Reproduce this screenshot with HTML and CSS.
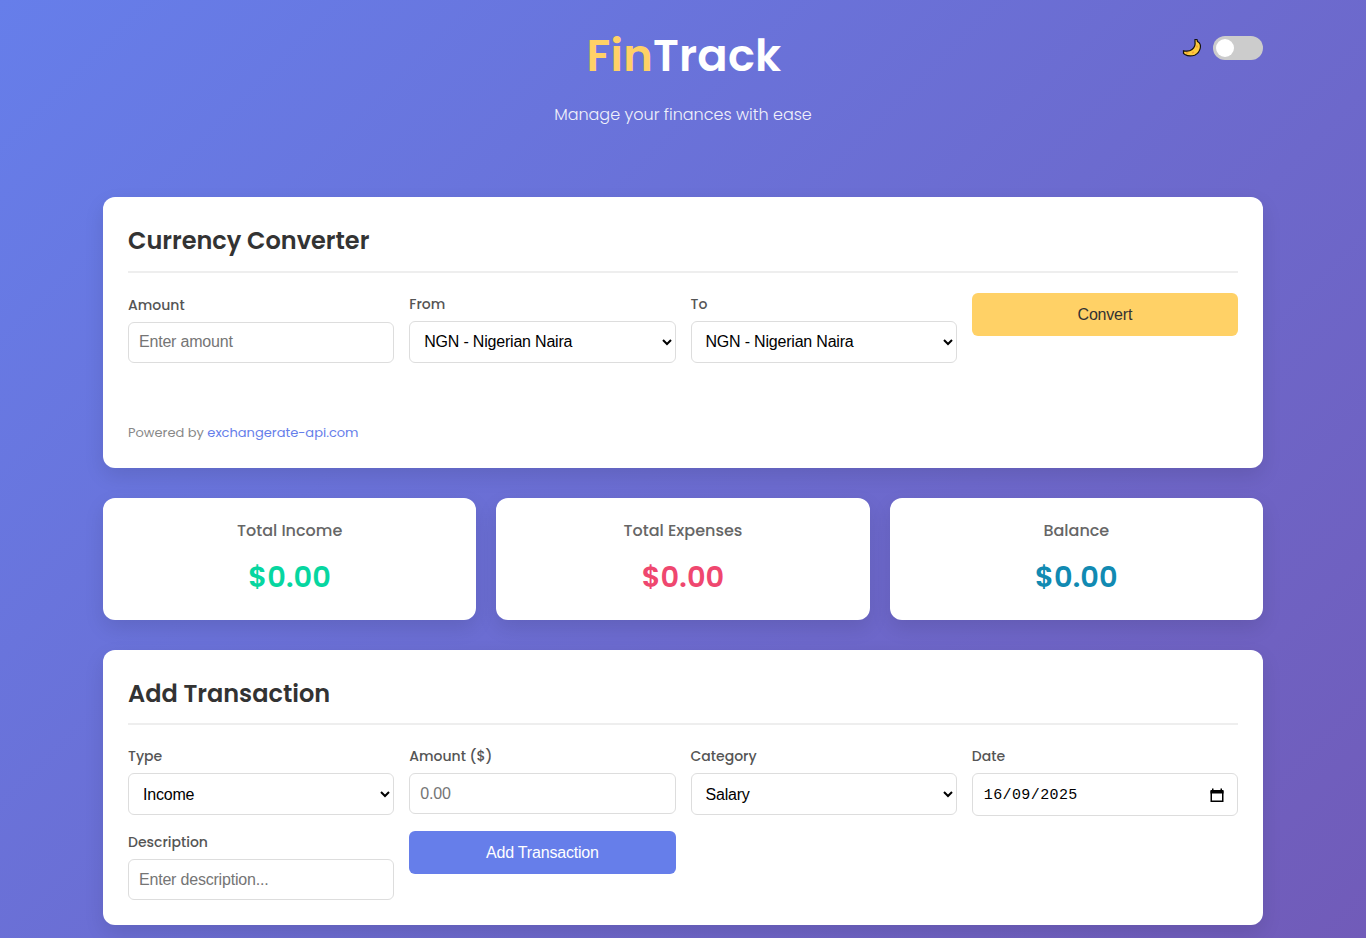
FILE: index.html
```html
<!DOCTYPE html>
<html lang="en">
<head>
<meta charset="UTF-8">
<title>FinTrack</title>
<link rel="stylesheet" href="styles.css">
</head>
<body>
<div class="container">
  <header class="header">
    <h1 class="logo"><span class="accent">Fin</span>Track</h1>
    <p class="tagline">Manage your finances with ease</p>
    <div class="theme">
      <svg class="moon" viewBox="0 0 20 20" width="20" height="20"><path d="M13 1.500H15L15.500 3.500Q19.200 5.500 18.300 10Q17.300 15 12.700 17.200Q7 19 3 16.500L1.500 15.500V12.800Q7 14 10 11.500Q13.800 8.500 13 4Z" fill="#ffcb3d" stroke="#15120c" stroke-width="1.2"/><path d="M4 14.800 6.500 15M15 7.500v2M10 15l2-1" stroke="#f4a332" stroke-width="1.500"/></svg>
      <span class="switch"><span class="knob"></span></span>
    </div>
  </header>

  <section class="card converter">
    <h2 class="title">Currency Converter</h2>
    <form class="grid align-end">
      <div class="group"><label class="label">Amount</label><input class="field" type="text" placeholder="Enter amount"></div>
      <div class="group"><label class="label">From</label><select class="field select"><option>NGN - Nigerian Naira</option></select></div>
      <div class="group"><label class="label">To</label><select class="field select"><option>NGN - Nigerian Naira</option></select></div>
      <button class="btn btn-convert" type="button">Convert</button>
    </form>
    <p class="powered">Powered by <a class="link">exchangerate-api.com</a></p>
  </section>

  <section class="summary">
    <div class="stat"><h3 class="stat-name">Total Income</h3><p class="stat-value income">$0.00</p></div>
    <div class="stat"><h3 class="stat-name">Total Expenses</h3><p class="stat-value expense">$0.00</p></div>
    <div class="stat"><h3 class="stat-name">Balance</h3><p class="stat-value balance">$0.00</p></div>
  </section>

  <section class="card">
    <h2 class="title">Add Transaction</h2>
    <form class="grid">
      <div class="group"><label class="label">Type</label><select class="field select"><option>Income</option></select></div>
      <div class="group"><label class="label">Amount ($)</label><input class="field" type="text" placeholder="0.00"></div>
      <div class="group"><label class="label">Category</label><select class="field select"><option>Salary</option></select></div>
      <div class="group"><label class="label">Date</label>
        <div class="field date"><span>16/09/2025</span>
          <svg width="14" height="15" viewBox="0 0 14 15"><path d="M1.250 3v10.250h11.500V3" fill="none" stroke="#000" stroke-width="1.500"/><path d="M.500 2h13v3.500H.500zM2 .500h1.500v2H2zM10.500 .500h1.500v2H10.500z"/></svg>
        </div>
      </div>
      <div class="group"><label class="label">Description</label><input class="field" type="text" placeholder="Enter description..."></div>
      <button class="btn btn-add" type="button">Add Transaction</button>
    </form>
  </section>
</div>
</body>
</html>
```
FILE: styles.css
```css
* { box-sizing: border-box; margin: 0; padding: 0; }
html { height: 938px; overflow: hidden; }
body {
  height: 938px;
  overflow: hidden;
  font-family: Poppins, Inter, sans-serif;
  line-height: 1.6;
  color: #333;
  background: linear-gradient(135deg, #667eea 0%, #764ba2 100%) 0 0 / 100% 2000px no-repeat;
}
.container { width: 1200px; margin: 0 auto; padding: 20px; }
.header { position: relative; height: 177.4px; text-align: center; color: #fff; }
.logo { padding-left: 2px; font-size: 44.8px; font-weight: 600; line-height: 72px; letter-spacing: 0.2px; }
.accent { color: #ffd166; }
.tagline { margin-top: 10px; font-size: 16px; font-weight: 300; line-height: 26px; opacity: .9; }
.theme { position: absolute; top: 16px; right: 0; display: flex; align-items: center; gap: 11px; }
.switch { width: 50px; height: 24px; padding: 3px; border-radius: 12px; background: #ccc; }
.knob { display: block; width: 18px; height: 18px; border-radius: 50%; background: #fff; }
.card {
  padding: 25px;
  margin-bottom: 30px;
  border-radius: 12px;
  background: #fff;
  box-shadow: 0 8px 20px rgba(0, 0, 0, .1);
}
.converter { height: 270.6px; }
.title {
  margin-bottom: 20px;
  padding-bottom: 10px;
  border-bottom: 2px solid #eee;
  font-size: 24px;
  font-weight: 600;
  line-height: 38.4px;
}
.grid { display: grid; grid-template-columns: repeat(4, 1fr); gap: 15px; align-items: start; }
.align-end { align-items: end; }
.group { display: flex; flex-direction: column; }
.label { margin-bottom: 5px; font-size: 14px; font-weight: 500; line-height: 22.4px; color: #555; }
.align-end .label { margin-bottom: 5.5px; }
.field {
  width: 100%;
  height: 41px;
  padding: 11px 10px 9px;
  border: 1px solid #ddd;
  border-radius: 6px;
  background: #fff;
  font: 16px "Liberation Sans", Arial, sans-serif;
  letter-spacing: -0.2px;
  color: #000;
}
.field::placeholder { color: #757575; }
.select { height: 42px; }
.align-end .field { padding-top: 10px; padding-bottom: 10px; }
.date {
  height: 43.4px;
  display: flex;
  align-items: center;
  justify-content: space-between;
  padding: 12px 13px 10px 11px;
  font: 15px "Liberation Mono", monospace;
  letter-spacing: 0.4px;
}
.btn { height: 43px; padding-top: 1px; border: 0; border-radius: 6px; font: 16px "Liberation Sans", Arial, sans-serif; letter-spacing: -0.2px; }
.btn-convert { align-self: start; background: #ffd166; color: #333; }
.btn-add { background: #667eea; color: #fff; }
.powered { margin-top: 59.4px; font-size: 13px; line-height: 21px; color: #888; }
.link { color: #667eea; }
.summary { display: grid; grid-template-columns: repeat(3, 1fr); gap: 20px; margin-bottom: 30px; }
.stat {
  height: 122px;
  padding: 20px;
  border-radius: 12px;
  background: #fff;
  text-align: center;
  box-shadow: 0 8px 20px rgba(0, 0, 0, .1);
}
.stat-name { margin-bottom: 10px; font-size: 16px; font-weight: 500; line-height: 25.6px; color: #666; }
.stat-value { font-size: 28.8px; font-weight: 600; line-height: 46px; letter-spacing: 0.1px; }
.income { color: #06d6a0; }
.expense { color: #ef476f; }
.balance { color: #118ab2; }
```
